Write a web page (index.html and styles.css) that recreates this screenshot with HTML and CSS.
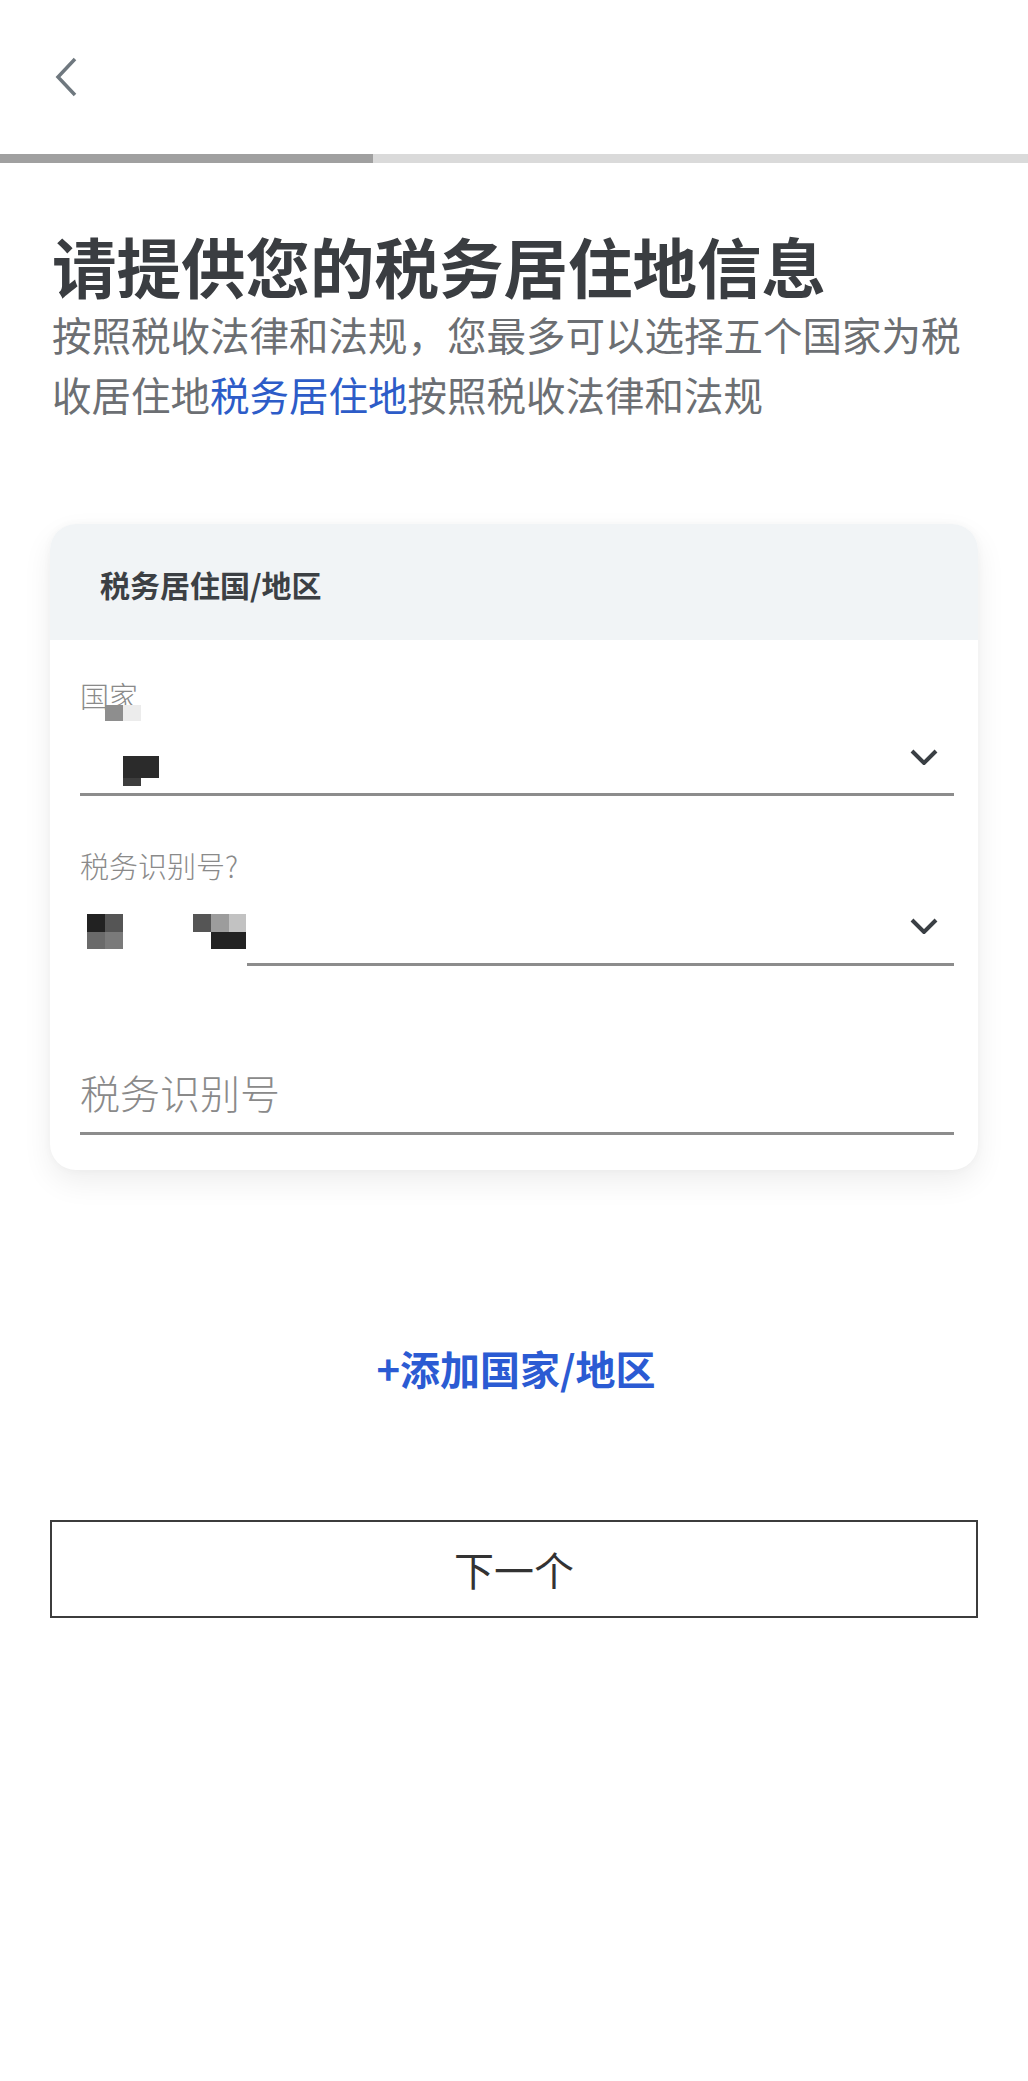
FILE: index.html
```html
<!DOCTYPE html>
<html lang="zh-CN">
<head>
  <meta charset="UTF-8" />
  <meta name="viewport" content="width=device-width, initial-scale=1.0">
  <title>税务居住地信息</title>
  <link rel="stylesheet" href="styles.css">
</head>
<body>

  <div class="topbar">
    <a href="#" class="back">
      <svg width="24" height="40" viewBox="0 0 24 40">
        <path d="M21 2 L4 20 L21 38" fill="none" stroke="#6f787f" stroke-width="3.5" />
      </svg>
    </a>
  </div>

  <div class="progress">
    <div class="progress-done"></div>
  </div>

  <div class="intro">
    <h1 class="title">请提供您的税务居住地信息</h1>
    <p class="subtitle">按照税收法律和法规，您最多可以选择五个国家为税收居住地<span class="hl">税务居住地</span>按照税收法律和法规</p>
  </div>

  <div class="card">
    <div class="card-head">税务居住国/地区</div>

    <div class="field">
      <div class="label">国家</div>
      <div class="value-row">
        <!-- 打码的国家名 -->
        <svg class="mosaic" width="170" height="80" viewBox="0 0 170 80">
          <rect x="25" y="-8" width="18" height="16" fill="#8e8e8e" />
          <rect x="43" y="-8" width="18" height="16" fill="#ececec" />
          <rect x="43" y="43" width="36" height="22" fill="#2b2b2b" />
          <rect x="43" y="65" width="18" height="8" fill="#3d3d3d" />
        </svg>
        <svg class="chev" width="28" height="16" viewBox="0 0 28 16">
          <path d="M2 2 L14 14 L26 2" fill="none" stroke="#3a3f44" stroke-width="4" />
        </svg>
      </div>
    </div>

    <div class="field">
      <div class="label">税务识别号?</div>
      <div class="value-row masked">
        <!-- 打码的证件类型 -->
        <svg class="mosaic" width="170" height="80" viewBox="0 0 170 80">
          <rect x="7" y="31" width="18" height="18" fill="#222" />
          <rect x="25" y="31" width="18" height="18" fill="#555" />
          <rect x="7" y="49" width="18" height="17" fill="#6a6a6a" />
          <rect x="25" y="49" width="18" height="17" fill="#7a7a7a" />
          <rect x="113" y="31" width="18" height="18" fill="#555" />
          <rect x="131" y="31" width="18" height="18" fill="#9c9c9c" />
          <rect x="149" y="31" width="17" height="18" fill="#c2c2c2" />
          <rect x="131" y="49" width="35" height="17" fill="#222" />
        </svg>
        <svg class="chev" width="28" height="16" viewBox="0 0 28 16">
          <path d="M2 2 L14 14 L26 2" fill="none" stroke="#3a3f44" stroke-width="4" />
        </svg>
      </div>
    </div>

    <div class="field field-input">
      <div class="placeholder">税务识别号</div>
    </div>
  </div>

  <a href="#" class="add-link">+添加国家/地区</a>

  <button class="next">下一个</button>

</body>
</html>
```

FILE: styles.css
```css
* {
  box-sizing: border-box;
}

body {
  margin: 0;
  padding: 0;
  font-family: "Noto Sans CJK SC", "Noto Sans", sans-serif;
  background-color: #fff;
  color: #3a3d41;
}

.topbar {
  height: 154px;
  padding: 57px 0 0 54px;
}

.back {
  display: block;
  width: 24px;
  height: 40px;
}

.back svg {
  display: block;
}

.progress {
  height: 9px;
  background-color: #dadada;
}

.progress-done {
  width: 373px;
  height: 100%;
  background-color: #a0a0a0;
}

.intro {
  padding: 0 52px;
}

.title {
  margin: 63px 0 0;
  font-size: 64.5px;
  line-height: 78px;
  font-weight: 700;
  color: #3a3d41;
}

.subtitle {
  margin: 0;
  font-size: 39.5px;
  line-height: 60px;
  color: #6c6f73;
}

.subtitle .hl {
  color: #2d5cc8;
}

.card {
  margin: 100px 50px 0;
  background-color: #fff;
  border-radius: 26px;
  overflow: hidden;
  box-shadow: 0 12px 30px rgba(0, 0, 0, 0.07), 0 0 10px rgba(0, 0, 0, 0.03);
  padding-bottom: 35px;
}

.card-head {
  height: 116px;
  display: flex;
  align-items: center;
  padding: 4px 0 0 50px;
  background-color: #f1f4f6;
  font-size: 30px;
  font-weight: 700;
  color: #3c4044;
}

.field {
  padding: 0 24px 0 30px;
}

.label {
  margin-top: 37px;
  font-size: 29px;
  line-height: 36px;
  color: #8a8a8a;
  font-weight: 300;
}

.field + .field .label {
  margin-top: 51px;
}

.value-row {
  height: 83px;
  display: flex;
  justify-content: space-between;
  align-items: flex-start;
  border-bottom: 3px solid #8c8c8c;
}

.value-row.masked {
  border-image: linear-gradient(to right, transparent 168px, #8c8c8c 168px) 1;
}

.mosaic {
  display: block;
  overflow: visible;
}

.chev {
  display: block;
  margin: 36px 16px 0 0;
}

.masked .chev {
  margin-top: 35px;
}

.field-input {
  margin-top: 98px;
}

.field-input .placeholder {
  font-size: 40px;
  line-height: 56px;
  color: #8a8a8a;
  font-weight: 300;
  padding-bottom: 12px;
  border-bottom: 3px solid #8c8c8c;
}

.add-link {
  display: block;
  margin-top: 172px;
  text-align: center;
  font-size: 40px;
  line-height: 52px;
  font-weight: 700;
  color: #2b5bd3;
  text-decoration: none;
  padding-left: 4px;
}

.next {
  display: block;
  width: 928px;
  height: 98px;
  margin: 126px 0 0 50px;
  background-color: #fff;
  border: 2px solid #3c3c3c;
  font-family: inherit;
  font-size: 40px;
  color: #333;
  cursor: pointer;
}
```
